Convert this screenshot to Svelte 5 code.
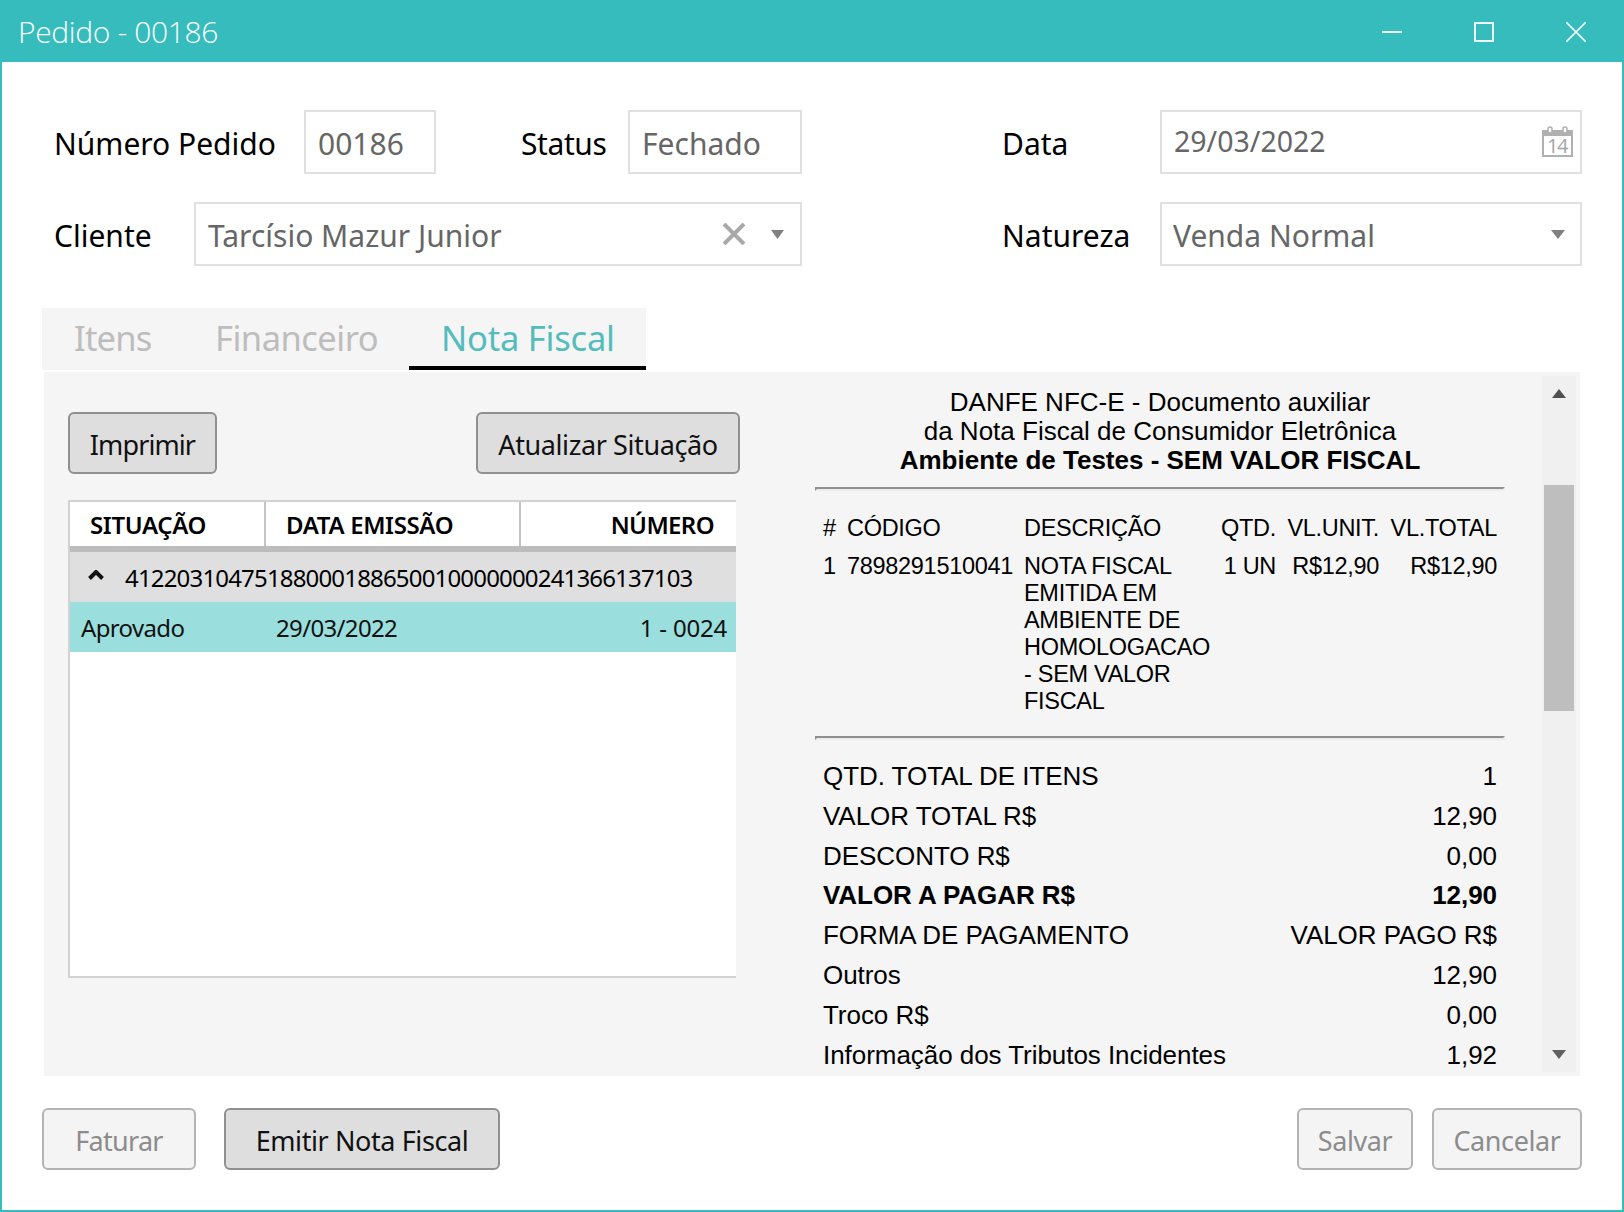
<script>
  const items = [
    ['QTD. TOTAL DE ITENS', '1', false],
    ['VALOR TOTAL R$', '12,90', false],
    ['DESCONTO R$', '0,00', false],
    ['VALOR A PAGAR R$', '12,90', true],
    ['FORMA DE PAGAMENTO', 'VALOR PAGO R$', false],
    ['Outros', '12,90', false],
    ['Troco R$', '0,00', false],
    ['Informação dos Tributos Incidentes', '1,92', false]
  ];
</script>

<div class="window">
  <header class="titlebar">
    <span class="title">Pedido - 00186</span>
    <div class="controls">
      <svg class="ctl ctl-min" width="20" height="20" viewBox="0 0 20 20"><path d="M0 10h20" /></svg>
      <svg class="ctl ctl-max" width="20" height="20" viewBox="0 0 20 20"><rect x="1" y="1" width="18" height="18" /></svg>
      <svg class="ctl ctl-close" width="20" height="20" viewBox="0 0 20 20"><path d="M0 0l20 20M20 0L0 20" /></svg>
    </div>
  </header>

  <section class="form">
    <div class="form-row">
      <div class="form-left">
        <span class="label w-num">Número Pedido</span>
        <div class="field f-num">00186</div>
        <span class="label w-status">Status</span>
        <div class="field f-status">Fechado</div>
      </div>
      <div class="form-right">
        <span class="label w-right">Data</span>
        <div class="field f-right f-date">
          <span class="date-text">29/03/2022</span>
          <svg class="cal" width="31" height="34" viewBox="0 0 31 34">
            <rect x="1" y="5" width="29" height="25" fill="#fff" stroke="#b0b0b0" stroke-width="2" />
            <rect x="0" y="4" width="31" height="6" fill="#b0b0b0" />
            <rect x="6" y="1" width="4" height="6" rx="2" fill="#fff" stroke="#b0b0b0" stroke-width="1.5" />
            <rect x="21" y="1" width="4" height="6" rx="2" fill="#fff" stroke="#b0b0b0" stroke-width="1.5" />
            <text x="15" y="27" text-anchor="middle" class="cal-text">14</text>
          </svg>
        </div>
      </div>
    </div>
    <div class="form-row">
      <div class="form-left">
        <span class="label w-cli">Cliente</span>
        <div class="field f-cli">
          <span class="grow">Tarcísio Mazur Junior</span>
          <svg class="clear" width="24" height="22" viewBox="0 0 24 22"><path d="M2 1l20 20M22 1L2 21" /></svg>
          <svg class="tri tri-cli" width="13" height="9" viewBox="0 0 13 9"><path d="M0 0h13L6.5 9z" /></svg>
        </div>
      </div>
      <div class="form-right">
        <span class="label w-right">Natureza</span>
        <div class="field f-right f-nat">
          <span class="grow">Venda Normal</span>
          <svg class="tri" width="14" height="9" viewBox="0 0 14 9"><path d="M0 0h14L7 9z" /></svg>
        </div>
      </div>
    </div>
  </section>

  <nav class="tabs">
    <span class="tab t1">Itens</span>
    <span class="tab t2">Financeiro</span>
    <span class="tab active">Nota Fiscal</span>
  </nav>

  <main class="panel">
    <div class="left">
      <div class="toolbar">
        <button class="btn b-imp">Imprimir</button>
        <button class="btn b-atu">Atualizar Situação</button>
      </div>
      <div class="grid">
        <div class="grid-head">
          <div class="gh gh1">SITUAÇÃO</div>
          <div class="gh gh2">DATA EMISSÃO</div>
          <div class="gh gh3">NÚMERO</div>
        </div>
        <div class="group">
          <svg class="chev" width="16" height="10" viewBox="0 0 16 10"><path d="M1.5 8.5L8 2l6.500 6.500" /></svg>
          <span>41220310475188000188650010000000241366137103</span>
        </div>
        <div class="row-sel">
          <span class="c1">Aprovado</span>
          <span class="c2">29/03/2022</span>
          <span class="c3">1 - 0024</span>
        </div>
      </div>
    </div>

    <div class="doc">
      <div class="doc-head">
        <div>DANFE NFC-E - Documento auxiliar</div>
        <div>da Nota Fiscal de Consumidor Eletrônica</div>
        <div class="bold">Ambiente de Testes - SEM VALOR FISCAL</div>
      </div>
      <div class="rule rule1"></div>
      <div class="items">
        <span class="ih">#</span><span class="ih">CÓDIGO</span><span class="ih">DESCRIÇÃO</span><span class="ih r">QTD.</span><span class="ih r">VL.UNIT.</span><span class="ih r">VL.TOTAL</span>
        <span>1</span><span>7898291510041</span><span>NOTA FISCAL EMITIDA EM AMBIENTE DE HOMOLOGACAO - SEM VALOR FISCAL</span><span class="r">1 UN</span><span class="r">R$12,90</span><span class="r">R$12,90</span>
      </div>
      <div class="rule rule2"></div>
      <div class="totals">
        {#each items as [k, v, b]}
          <div class="tot" class:bold={b}><span>{k}</span><span>{v}</span></div>
        {/each}
      </div>
    </div>

    <div class="scroll">
      <svg class="arrow" width="14" height="9" viewBox="0 0 14 9"><path d="M7 0l7 9H0z" /></svg>
      <div class="thumb"></div>
      <svg class="arrow arrow-d" width="14" height="9" viewBox="0 0 14 9"><path d="M0 0h14L7 9z" /></svg>
    </div>
  </main>

  <footer class="footer">
    <button class="btn off b-fat">Faturar</button>
    <button class="btn b-emi">Emitir Nota Fiscal</button>
    <span class="grow"></span>
    <button class="btn off b-sal">Salvar</button>
    <button class="btn off b-can">Cancelar</button>
  </footer>
</div>

<style>
  :global(body) { margin: 0; background: #fff; }
  .window {
    width: 1624px; height: 1212px; box-sizing: border-box;
    border: 2px solid #36bcbc; border-top: 0;
    background: #fff; overflow: hidden;
    font-family: "Noto Sans", sans-serif; font-size: 30px; color: #000;
    display: flex; flex-direction: column;
  }
  .titlebar {
    height: 62px; background: #36bcbc; color: #fff; flex: none;
    display: flex; align-items: center; justify-content: space-between;
    padding-left: 16px;
  }
  .title { font-family: "Open Sans", sans-serif; font-weight: 300; font-size: 30px; letter-spacing: -0.35px; }
  .controls { display: flex; gap: 72px; margin-right: 36px; margin-top: 1px; }
  .ctl { display: block; fill: none; stroke: #eefafa; }
  .ctl-min path { stroke-width: 2; }
  .ctl-max rect { stroke-width: 2; }
  .ctl-close path { stroke-width: 1.6; }

  .form { padding: 48px 0 0 52px; display: flex; flex-direction: column; gap: 28px; flex: none; }
  .form-row { display: flex; height: 64px; }
  .form-left { width: 748px; display: flex; align-items: center; }
  .form-right { margin-left: 200px; display: flex; align-items: center; }
  .label { flex: none; padding-top: 2px; }
  .w-num { width: 250px; }
  .w-status { width: 107px; margin-left: 85px; letter-spacing: -0.4px; }
  .w-cli { width: 140px; }
  .w-right { width: 158px; }
  .field {
    height: 64px; box-sizing: border-box; border: 2px solid #e0e0e0; color: #666;
    display: flex; align-items: center; padding: 2px 0 0 12px; background: #fff; flex: none;
  }
  .f-num { width: 132px; }
  .f-status { width: 174px; }
  .f-cli { width: 608px; }
  .f-right { width: 422px; }
  .date-text { flex: 1; position: relative; top: -2px; font-size: 28.500px; }
  .f-nat { padding-left: 11px; }
  .grow { flex: 1; }
  .cal { margin-right: 7px; display: block; }
  .cal-text { font-family: "Open Sans", sans-serif; font-size: 20px; letter-spacing: -1.5px; fill: #a4a4a4; }
  .clear { fill: none; stroke: #a9a9a9; stroke-width: 4; margin-right: 25px; margin-top: -3px; }
  .tri { fill: #808080; margin-right: 15px; margin-top: -2px; }
  .tri-cli { margin-right: 16px; }

  .tabs {
    width: 604px; height: 62px; margin: 42px 0 2px 40px; background: #f5f5f5; flex: none;
    display: flex; align-items: center; box-sizing: border-box; font-size: 34.500px; letter-spacing: -0.5px;
  }
  .tab { color: #bdbdbd; height: 62px; box-sizing: border-box; display: flex; align-items: center; padding-bottom: 4px; white-space: nowrap; flex: none; }
  .t1 { margin-left: 32px; width: 141px; letter-spacing: -0.8px; }
  .t2 { width: 194px; }
  .tab.active {
    width: 237px; padding: 2px 0 2px 32px; color: #53bcbc; border-bottom: 4px solid #000; letter-spacing: -0.2px;
  }

  .panel {
    margin: 0 0 0 42px; width: 1536px; height: 704px; background: #f5f5f5; flex: none;
    display: flex; overflow: hidden;
  }
  .left { width: 692px; padding: 40px 0 0 24px; box-sizing: border-box; flex: none; }
  .toolbar { display: flex; justify-content: space-between; width: 672px; }
  .btn {
    font: inherit; font-size: 27px; letter-spacing: -0.4px; color: #111; background: #dedede; border: 2px solid #909090;
    border-radius: 6px; height: 62px; padding: 2px 0 0; box-sizing: border-box; display: block;
  }
  .btn.off { background: #f4f4f4; border-color: #b4b4b4; color: #8c8c8c; }
  .b-imp { width: 149px; letter-spacing: -0.9px; }
  .b-atu { width: 264px; }
  .grid {
    margin-top: 26px; width: 668px; height: 478px; box-sizing: border-box; background: #fff;
    border: 2px solid #d2d2d2; border-right: 0;
  }
  .grid-head { display: grid; grid-template-columns: 196px 255px 1fr; height: 50px; box-sizing: border-box; border-bottom: 6px solid #bcbcbc; font-size: 24px; letter-spacing: -0.35px; font-weight: 600; }
  .gh { display: flex; align-items: center; white-space: nowrap; }
  .gh1 { padding-left: 20px; border-right: 2px solid #c4c4c4; }
  .gh2 { padding-left: 20px; border-right: 2px solid #c4c4c4; }
  .gh3 { justify-content: flex-end; padding-right: 22px; letter-spacing: -0.6px; }
  .group {
    height: 50px; background: #dfdfdf; display: flex; align-items: center; font-size: 24px; letter-spacing: -0.83px;
  }
  .chev { fill: none; stroke: #111; stroke-width: 4; margin: -4px 21px 0 18px; flex: none; }
  .row-sel {
    height: 50px; background: #9adedd; display: grid; grid-template-columns: 195px 1fr auto; align-items: center;
    font-size: 24px; letter-spacing: -0.65px; padding: 0 9px 0 11px; box-sizing: border-box; color: #111;
  }
  .c1, .c2 { white-space: nowrap; }
  .c3 { letter-spacing: -0.2px; }

  .doc { width: 690px; margin-left: 79px; flex: none; font-family: "Liberation Sans", sans-serif; color: #000; }
  .doc-head { padding-top: 16px; text-align: center; font-size: 26px; line-height: 29px; }
  .bold { font-weight: 700; }
  .rule { height: 0; border-style: solid; border-width: 2px; border-color: #8f8f8f #ececec #ececec #8f8f8f; }
  .rule1 { margin-top: 12px; }
  .items {
    display: grid; grid-template-columns: 24px 177px 197px 55px 103px 118px; padding: 24px 0 0 8px;
    font-size: 23.500px; line-height: 27px; row-gap: 11px; letter-spacing: -0.3px;
  }
  .items span:nth-child(6n+3) { padding-right: 5px; }
  .r { text-align: right; white-space: nowrap; }
  .rule2 { margin-top: 21px; }
  .totals { padding: 17px 8px 0; font-size: 26px; letter-spacing: -0.05px; }
  .tot { display: flex; justify-content: space-between; height: 39.800px; line-height: 39.800px; white-space: nowrap; }

  .scroll {
    width: 34px; margin: 4px 0 4px 37px; background: #f0f0f0; flex: none; position: relative;
    box-sizing: border-box; display: flex; flex-direction: column; align-items: center;
  }
  .arrow { fill: #505050; margin-top: 13px; flex: none; }
  .arrow-d { fill: #606060; margin-top: auto; margin-bottom: 13px; }
  .thumb { position: absolute; top: 109px; left: 2px; width: 30px; height: 226px; background: #bebebe; }

  .footer { display: flex; margin-top: 32px; padding: 0 40px; height: 62px; flex: none; align-items: stretch; }
  .b-fat { width: 154px; letter-spacing: -0.7px; }
  .b-emi { width: 276px; margin-left: 28px; }
  .b-sal { width: 116px; }
  .b-can { width: 150px; margin-left: 19px; }
</style>
